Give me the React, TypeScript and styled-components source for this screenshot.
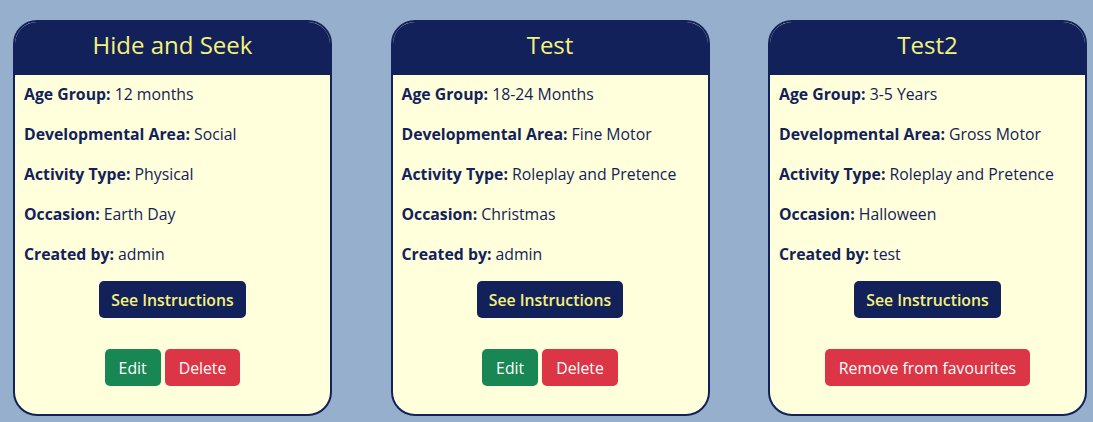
import styled, { createGlobalStyle } from 'styled-components';

const GlobalStyle = createGlobalStyle`
  body {
    margin: 0;
    background: #95afcc;
    font-family: 'Open Sans', 'Noto Sans', sans-serif;
  }
`;

const Grid = styled.div`
  display: flex;
  gap: 58.5px;
  padding: 20px 0 20px 13px;
`;

const Card = styled.div`
  flex-shrink: 0;
  width: 319px;
  height: 396px;
  box-sizing: border-box;
  border: 2px solid #13215a;
  border-radius: 24px;
  background: #ffffdc;
  overflow: hidden;
  display: flex;
  flex-direction: column;
`;

const CardHeader = styled.h2`
  margin: 0;
  height: 53px;
  background: #13215a;
  color: #f5f27a;
  font-size: 24px;
  font-weight: 400;
  display: flex;
  align-items: center;
  justify-content: center;
  padding-bottom: 9px;
  box-sizing: border-box;
`;

const CardBody = styled.div`
  padding: 8px 9px 0;
  display: flex;
  flex-direction: column;
  color: #13215a;
`;

const Row = styled.p`
  margin: 0;
  height: 40px;
  line-height: 22px;
  font-size: 15.8px;

  b {
    font-weight: 700;
  }
`;

const Actions = styled.div<{ $top: number }>`
  display: flex;
  justify-content: center;
  gap: 4px;
  margin-top: ${(p) => p.$top}px;
`;

const Button = styled.button<{ $tone: 'navy' | 'green' | 'red' }>`
  border: none;
  border-radius: 5px;
  height: 37px;
  padding: 0 ${(p) => (p.$tone === 'navy' ? 12 : 14)}px;
  font-family: inherit;
  font-size: 15.8px;
  cursor: pointer;
  font-weight: ${(p) => (p.$tone === 'navy' ? 600 : 400)};
  color: ${(p) => (p.$tone === 'navy' ? '#f5f27a' : '#ffffff')};
  background: ${(p) =>
    p.$tone === 'navy' ? '#13215a' : p.$tone === 'green' ? '#198754' : '#dc3545'};
`;

type Activity = {
  title: string;
  age: string;
  area: string;
  type: string;
  occasion: string;
  creator: string;
  favourite?: boolean;
};

const activities: Activity[] = [
  { title: 'Hide and Seek', age: '12 months', area: 'Social', type: 'Physical', occasion: 'Earth Day', creator: 'admin' },
  { title: 'Test', age: '18-24 Months', area: 'Fine Motor', type: 'Roleplay and Pretence', occasion: 'Christmas', creator: 'admin' },
  { title: 'Test2', age: '3-5 Years', area: 'Gross Motor', type: 'Roleplay and Pretence', occasion: 'Halloween', creator: 'test', favourite: true },
];

const ActivityCard = ({ a }: { a: Activity }) => (
  <Card>
    <CardHeader>{a.title}</CardHeader>
    <CardBody>
      <Row><b>Age Group:</b> {a.age}</Row>
      <Row><b>Developmental Area:</b> {a.area}</Row>
      <Row><b>Activity Type:</b> {a.type}</Row>
      <Row><b>Occasion:</b> {a.occasion}</Row>
      <Row><b>Created by:</b> {a.creator}</Row>
      <Actions $top={-2}>
        <Button $tone="navy">See Instructions</Button>
      </Actions>
      <Actions $top={31}>
        {a.favourite ? (
          <Button $tone="red">Remove from favourites</Button>
        ) : (
          <>
            <Button $tone="green">Edit</Button>
            <Button $tone="red">Delete</Button>
          </>
        )}
      </Actions>
    </CardBody>
  </Card>
);

export default function App() {
  return (
    <>
      <GlobalStyle />
      <Grid>
        {activities.map((a) => (
          <ActivityCard key={a.title} a={a} />
        ))}
      </Grid>
    </>
  );
}
